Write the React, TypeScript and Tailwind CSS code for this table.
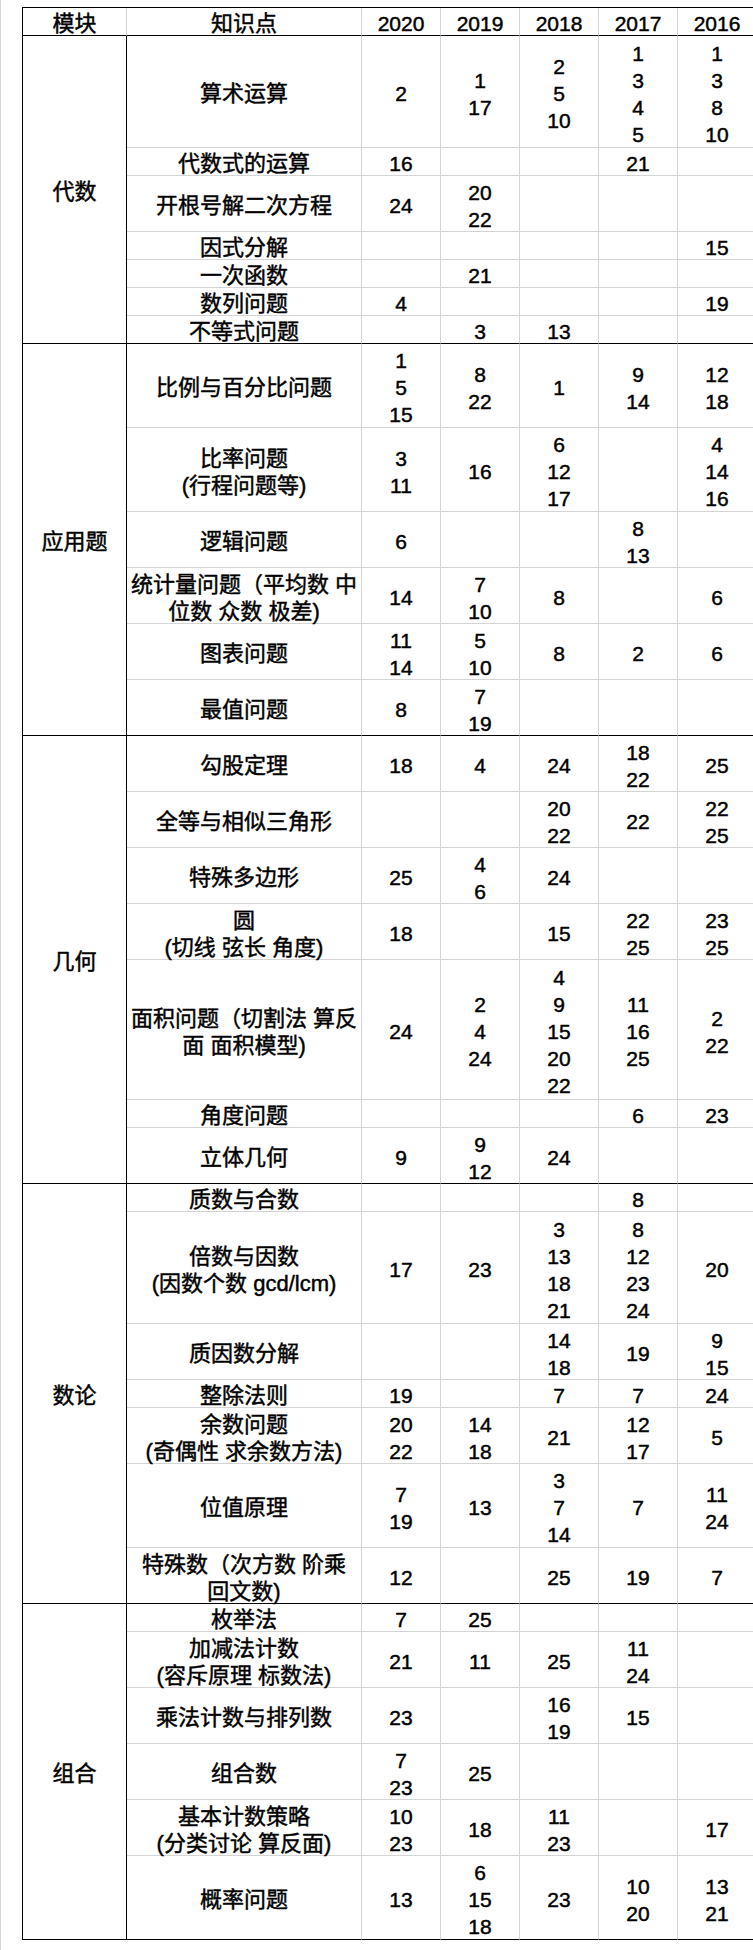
import React from 'react'

type Row = {
    label: React.ReactNode
    lines: number
    vals: number[][]
}

type Group = {
    name: string
    rows: Row[]
}

const years = ['2020', '2019', '2018', '2017', '2016']

const heights: Record<number, string> = {
    1: 'h-[28px]',
    2: 'h-[56px]',
    3: 'h-[84px]',
    4: 'h-[112px]',
    5: 'h-[140px]',
}

const groups: Group[] = [
    {
        name: '代数',
        rows: [
            { label: '算术运算', lines: 4, vals: [[2], [1, 17], [2, 5, 10], [1, 3, 4, 5], [1, 3, 8, 10]] },
            { label: '代数式的运算', lines: 1, vals: [[16], [], [], [21], []] },
            { label: '开根号解二次方程', lines: 2, vals: [[24], [20, 22], [], [], []] },
            { label: '因式分解', lines: 1, vals: [[], [], [], [], [15]] },
            { label: '一次函数', lines: 1, vals: [[], [21], [], [], []] },
            { label: '数列问题', lines: 1, vals: [[4], [], [], [], [19]] },
            { label: '不等式问题', lines: 1, vals: [[], [3], [13], [], []] },
        ],
    },
    {
        name: '应用题',
        rows: [
            { label: '比例与百分比问题', lines: 3, vals: [[1, 5, 15], [8, 22], [1], [9, 14], [12, 18]] },
            { label: <>比率问题<br />(行程问题等)</>, lines: 3, vals: [[3, 11], [16], [6, 12, 17], [], [4, 14, 16]] },
            { label: '逻辑问题', lines: 2, vals: [[6], [], [], [8, 13], []] },
            { label: <>统计量问题（平均数 中<br />位数 众数 极差)</>, lines: 2, vals: [[14], [7, 10], [8], [], [6]] },
            { label: '图表问题', lines: 2, vals: [[11, 14], [5, 10], [8], [2], [6]] },
            { label: '最值问题', lines: 2, vals: [[8], [7, 19], [], [], []] },
        ],
    },
    {
        name: '几何',
        rows: [
            { label: '勾股定理', lines: 2, vals: [[18], [4], [24], [18, 22], [25]] },
            { label: '全等与相似三角形', lines: 2, vals: [[], [], [20, 22], [22], [22, 25]] },
            { label: '特殊多边形', lines: 2, vals: [[25], [4, 6], [24], [], []] },
            { label: <>圆<br />(切线 弦长 角度)</>, lines: 2, vals: [[18], [], [15], [22, 25], [23, 25]] },
            { label: <>面积问题（切割法 算反<br />面 面积模型)</>, lines: 5, vals: [[24], [2, 4, 24], [4, 9, 15, 20, 22], [11, 16, 25], [2, 22]] },
            { label: '角度问题', lines: 1, vals: [[], [], [], [6], [23]] },
            { label: '立体几何', lines: 2, vals: [[9], [9, 12], [24], [], []] },
        ],
    },
    {
        name: '数论',
        rows: [
            { label: '质数与合数', lines: 1, vals: [[], [], [], [8], []] },
            { label: <>倍数与因数<br />(因数个数 gcd/lcm)</>, lines: 4, vals: [[17], [23], [3, 13, 18, 21], [8, 12, 23, 24], [20]] },
            { label: '质因数分解', lines: 2, vals: [[], [], [14, 18], [19], [9, 15]] },
            { label: '整除法则', lines: 1, vals: [[19], [], [7], [7], [24]] },
            { label: <>余数问题<br />(奇偶性 求余数方法)</>, lines: 2, vals: [[20, 22], [14, 18], [21], [12, 17], [5]] },
            { label: '位值原理', lines: 3, vals: [[7, 19], [13], [3, 7, 14], [7], [11, 24]] },
            { label: <>特殊数（次方数 阶乘<br />回文数)</>, lines: 2, vals: [[12], [], [25], [19], [7]] },
        ],
    },
    {
        name: '组合',
        rows: [
            { label: '枚举法', lines: 1, vals: [[7], [25], [], [], []] },
            { label: <>加减法计数<br />(容斥原理 标数法)</>, lines: 2, vals: [[21], [11], [25], [11, 24], []] },
            { label: '乘法计数与排列数', lines: 2, vals: [[23], [], [16, 19], [15], []] },
            { label: '组合数', lines: 2, vals: [[7, 23], [25], [], [], []] },
            { label: <>基本计数策略<br />(分类讨论 算反面)</>, lines: 2, vals: [[10, 23], [18], [11, 23], [], [17]] },
            { label: '概率问题', lines: 3, vals: [[13], [6, 15, 18], [23], [10, 20], [13, 21]] },
        ],
    },
]

const Txt = ({ children }: { children: React.ReactNode }) => (
    <div className="translate-y-[2px]">{children}</div>
)

const App = () => {
    return (
        <div className="w-[753px] min-h-[1950px] overflow-hidden bg-white border-l border-[#d6d6d6] pt-[7px] font-['Liberation_Sans','Noto_Sans_CJK_SC',sans-serif] text-[22px] leading-[27px] text-black [-webkit-text-stroke:0.45px_#000]">
            <table className="ml-[21px] w-[735px] table-fixed border-separate border-spacing-0 border-l border-t border-black">
                <colgroup>
                    <col className="w-[104px]" />
                    <col className="w-[235px]" />
                    <col className="w-[79px]" />
                    <col className="w-[79px]" />
                    <col className="w-[79px]" />
                    <col className="w-[79px]" />
                    <col className="w-[79px]" />
                </colgroup>
                <thead>
                    <tr className="h-[28px]">
                        <th className="p-0 font-normal text-center align-middle border-r border-b border-r-[#d4d4d4] border-b-black"><Txt>模块</Txt></th>
                        <th className="p-0 font-normal text-center align-middle border-r border-b border-r-[#d4d4d4] border-b-black"><Txt>知识点</Txt></th>
                        {years.map((y, i) => (
                            <th
                                key={y}
                                className={
                                    i === years.length - 1
                                        ? 'p-0 font-normal text-[21px] text-center align-middle border-r border-b border-black'
                                        : 'p-0 font-normal text-[21px] text-center align-middle border-r border-b border-r-[#d4d4d4] border-b-black'
                                }
                            >
                                <Txt>{y}</Txt>
                            </th>
                        ))}
                    </tr>
                </thead>
                <tbody>
                    {groups.map((g) =>
                        g.rows.map((r, ri) => {
                            const last = ri === g.rows.length - 1
                            const bottom = last ? 'border-b-black' : 'border-b-[#d4d4d4]'
                            return (
                                <tr key={g.name + ri} className={heights[r.lines]}>
                                    {ri === 0 && (
                                        <td rowSpan={g.rows.length} className="p-0 text-center align-middle border-r border-b border-black">
                                            <Txt>{g.name}</Txt>
                                        </td>
                                    )}
                                    <td className={`p-0 px-[4px] text-center align-middle whitespace-nowrap border-r border-b border-r-[#d4d4d4] ${bottom}`}>
                                        <Txt>{r.label}</Txt>
                                    </td>
                                    {r.vals.map((v, vi) => (
                                        <td
                                            key={vi}
                                            className={`p-0 text-[21px] text-center align-middle border-r border-b ${vi === 4 ? 'border-r-black' : 'border-r-[#d4d4d4]'} ${bottom}`}
                                        >
                                            <Txt>
                                                {v.map((n, ni) => (
                                                    <div key={ni}>{n}</div>
                                                ))}
                                            </Txt>
                                        </td>
                                    ))}
                                </tr>
                            )
                        })
                    )}
                </tbody>
            </table>
        </div>
    )
}

export default App
